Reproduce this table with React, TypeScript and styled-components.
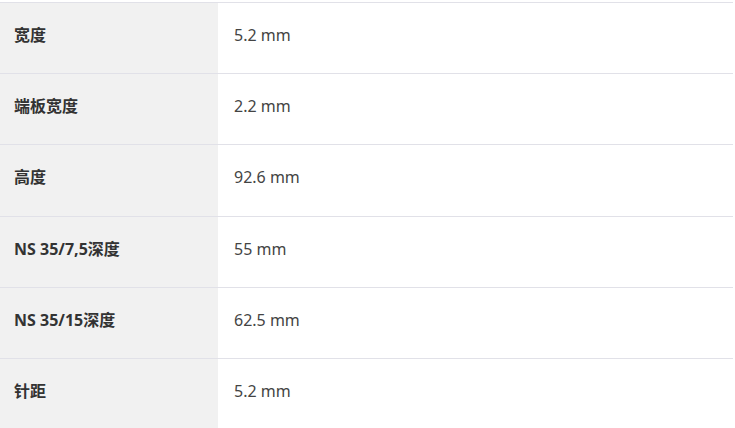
import React from "react";
import styled, { createGlobalStyle } from "styled-components";

const Global = createGlobalStyle`
  html, body { margin: 0; padding: 0; background: #fff; }
  body { font-family: "Noto Sans", "Noto Sans CJK SC", sans-serif; }
`;

const Table = styled.div`
  width: 733px;
  padding-top: 2px;
  display: flex;
  flex-direction: column;
`;

const Row = styled.div`
  display: grid;
  grid-template-columns: 218px 1fr;
  height: 71.2px;
  box-sizing: border-box;
  border-top: 1px solid #e1e1e8;
`;

const Label = styled.div`
  background: #f1f1f1;
  padding: 21px 14px 0;
  font-size: 16px;
  line-height: 22px;
  font-weight: 700;
  color: #333;
`;

const Value = styled.div`
  padding: 21px 16px 0;
  font-size: 16px;
  line-height: 22px;
  color: #444;
`;

const rows: [string, string][] = [
  ["宽度", "5.2 mm"],
  ["端板宽度", "2.2 mm"],
  ["高度", "92.6 mm"],
  ["NS 35/7,5深度", "55 mm"],
  ["NS 35/15深度", "62.5 mm"],
  ["针距", "5.2 mm"],
];

export default function App() {
  return (
    <>
      <Global />
      <Table>
        {rows.map(([k, v]) => (
          <Row key={k}>
            <Label>{k}</Label>
            <Value>{v}</Value>
          </Row>
        ))}
      </Table>
    </>
  );
}
